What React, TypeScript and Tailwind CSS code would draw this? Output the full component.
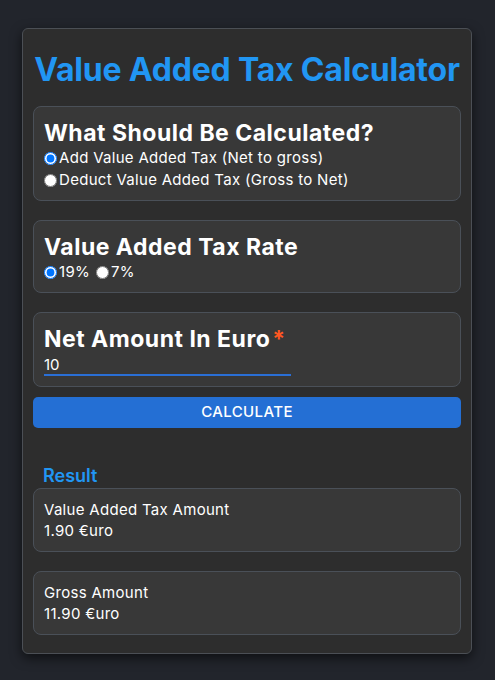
import { useState } from 'react';

export default function App() {
  const [mode, setMode] = useState('add');
  const [rate, setRate] = useState('19');
  const [amount, setAmount] = useState('10');

  return (
    <div className="min-h-screen bg-[#22252c] pt-7 font-['Inter',sans-serif]">
      <div className="ml-[22px] w-[450px] rounded-md border border-[#4b4f55] bg-[#2d2d2d] px-[10px] pb-[18px] shadow-[0_4px_12px_rgba(0,0,0,0.6)]">
        {/* Title */}
        <h1 className="pt-[21px] pb-[16px] text-center text-[32px] font-bold leading-[40px] tracking-[-0.2px] text-[#2196f3]">
          Value Added Tax Calculator
        </h1>

        {/* Mode */}
        <div className="rounded-lg border border-[#4a5058] bg-[#383838] px-[10px] pt-[12px] pb-[9px]">
          <h2 className="text-[23px] font-bold leading-[28px] tracking-[0.5px] text-white">What Should Be Calculated?</h2>
          <label className="flex items-center gap-[2px] text-[15px] leading-[22px] tracking-[0.3px] text-white">
            <input type="radio" name="mode" checked={mode === 'add'} onChange={() => setMode('add')} className="m-0 h-[13px] w-[13px]" />
            Add Value Added Tax (Net to gross)
          </label>
          <label className="flex items-center gap-[2px] text-[15px] leading-[22px] tracking-[0.3px] text-white">
            <input type="radio" name="mode" checked={mode === 'deduct'} onChange={() => setMode('deduct')} className="m-0 h-[13px] w-[13px]" />
            Deduct Value Added Tax (Gross to Net)
          </label>
        </div>

        {/* Rate */}
        <div className="mt-[19px] rounded-lg border border-[#4a5058] bg-[#383838] px-[10px] pt-[12px] pb-[9px]">
          <h2 className="text-[23px] font-bold leading-[28px] tracking-[0.5px] text-white">Value Added Tax Rate</h2>
          <div className="flex items-center text-[15px] leading-[22px] tracking-[0.3px] text-white">
            <label className="flex items-center gap-[2px]">
              <input type="radio" name="rate" checked={rate === '19'} onChange={() => setRate('19')} className="m-0 h-[13px] w-[13px]" />
              19%
            </label>
            <label className="ml-[6px] flex items-center gap-[2px]">
              <input type="radio" name="rate" checked={rate === '7'} onChange={() => setRate('7')} className="m-0 h-[13px] w-[13px]" />
              7%
            </label>
          </div>
        </div>

        {/* Amount */}
        <div className="mt-[19px] rounded-lg border border-[#4a5058] bg-[#383838] px-[10px] pt-[12px] pb-[10px]">
          <h2 className="text-[23px] font-bold leading-[28px] tracking-[0.5px] text-white">
            Net Amount In Euro<span className="ml-[2px] text-[#ff5722]">*</span>
          </h2>
          <input
            value={amount}
            onChange={(e) => setAmount(e.target.value)}
            className="mt-[3px] block w-[247px] border-b-2 border-[#2a6fd6] bg-transparent text-[15px] leading-[18px] text-white outline-none"
          />
        </div>

        {/* Button */}
        <button className="mt-[10px] block h-[31px] w-full rounded-[5px] bg-[#246fd4] text-[15px] font-medium tracking-[0.4px] text-white">
          CALCULATE
        </button>

        {/* Result */}
        <div className="mt-[36px] px-[10px] text-[18px] font-semibold leading-[24px] text-[#2196f3]">Result</div>
        <div className="rounded-lg border border-[#4a5058] bg-[#383838] px-[10px] pt-[10px] pb-[10px] text-[15px] leading-[21px] tracking-[0.3px] text-white">
          <div>Value Added Tax Amount</div>
          <div>1.90 €uro</div>
        </div>
        <div className="mt-[19px] rounded-lg border border-[#4a5058] bg-[#383838] px-[10px] pt-[10px] pb-[10px] text-[15px] leading-[21px] tracking-[0.3px] text-white">
          <div>Gross Amount</div>
          <div>11.90 €uro</div>
        </div>
      </div>
    </div>
  );
}
